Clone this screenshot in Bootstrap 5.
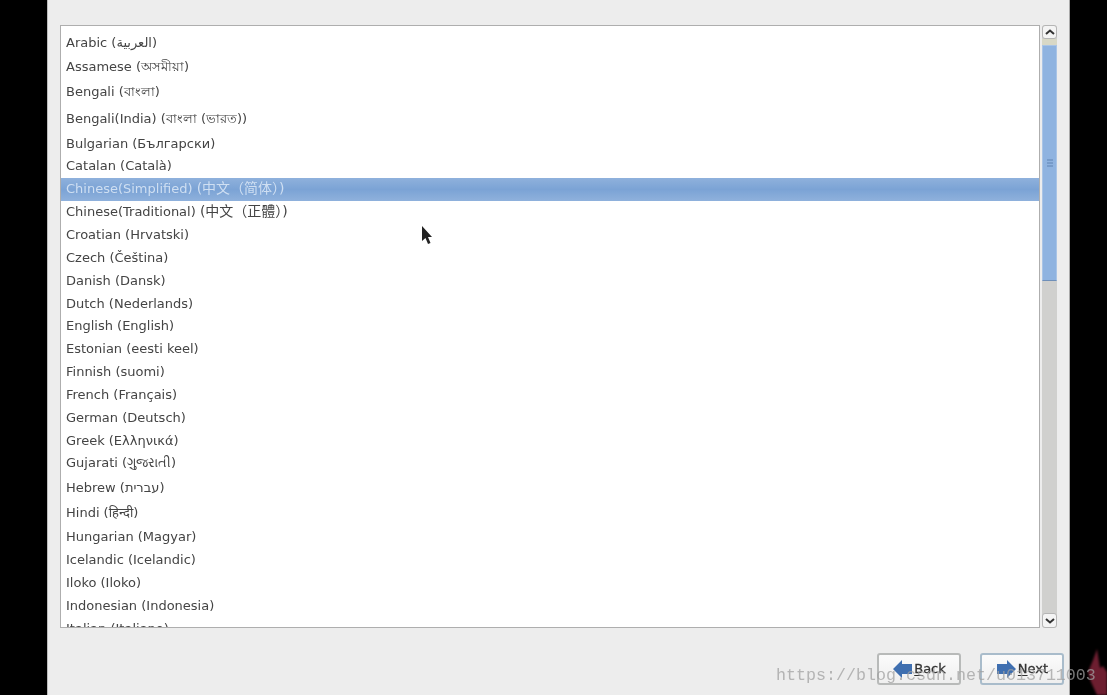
<!DOCTYPE html>
<html lang="en">
<head>
  <meta charset="UTF-8" />
  <title>Language</title>
  <link href="https://cdn.jsdelivr.net/npm/bootstrap@5.3.3/dist/css/bootstrap.min.css" rel="stylesheet"/>
  <style>
    body {
      background: #000;
      height: 695px;
      overflow: hidden;
      font-family: "DejaVu Sans", "Noto Sans", "Noto Sans CJK SC", sans-serif;
    }
    .installer {
      width: 1023px;
      height: 695px;
      margin-left: 47px;
      background: #ededed;
      border-left: 1px solid #bbb;
      border-right: 1px solid #aaa;
      padding: 25px 12px 0 12px;
      filter: blur(.5px);
    }
    .lang-box {
      width: 980px;
      height: 603px;
      background: #fff;
      border: 1px solid #aeaeae;
      overflow: hidden;
    }
    .lang-rows { margin-top: -19px; }
    .lang-row {
      height: 22.85px;
      line-height: 22.85px;
      padding-left: 5px;
      font-size: 13px;
      color: #444;
      white-space: nowrap;
    }
    .lang-row.h24 { height: 24px; line-height: 24px; }
    .lang-row.h25 { height: 25px; line-height: 25px; }
    .lang-row.h27 { height: 26.8px; line-height: 26.8px; }
    .lang-row.picked { background: linear-gradient(#8fb1dc, #7ba3d5 50%, #8fb1dc); color: #cfdff2; }
    .cjk { font-size: 14px; line-height: 1; }
    .scroll-col { width: 15px; height: 603px; margin-left: 2px; background: #d0d0ce; border-radius: 3px; }
    .scroll-btn {
      height: 14px;
      background: #f4f4f4;
      border: 1px solid #b5b5b5;
      border-radius: 3px;
    }
    .scroll-btn.down { height: 15px; }
    .scroll-band { height: 6px; background: #d8d8c6; }
    .scroll-thumb {
      height: 236px;
      background: #8fb3e0;
      border: 1px solid #a9c4e6;
      border-bottom-color: #6f8fb8;
    }
    .scroll-fill { height: 332px; }
    .nav-row { margin-top: 25px; margin-right: -7px; gap: 19px; }
    .nav-btn {
      width: 84px;
      height: 32px;
      padding: 0 0 0 1px;
      background: linear-gradient(#fbfbfb, #efefef);
      border: 2px solid #b8bab9;
      border-radius: 3px;
      color: #333;
      font-size: 13px;
      gap: 2px;
      -webkit-text-stroke: .3px #333;
    }
    .nav-btn.next-btn { border-color: #a9bccb; }
    .nav-btn u { text-underline-offset: 2px; }
    .pointer { position: absolute; left: 421px; top: 226px; filter: blur(.7px); }
    .watermark {
      position: absolute;
      left: 776px;
      top: 666px;
      font-family: "Liberation Mono", monospace;
      font-size: 16.67px;
      line-height: 20px;
      color: rgba(160, 160, 160, .75);
      white-space: nowrap;
      filter: blur(.4px);
    }
    .flame { position: absolute; left: 1084px; top: 646px; filter: blur(1px); }
  </style>
</head>
<body>
  <div class="installer">
    <div class="d-flex">
      <div class="lang-box">
        <div class="lang-rows">
          <div class="lang-row h24">Afrikaans (Afrikaans)</div>
          <div class="lang-row h24">Arabic (العربية)</div>
          <div class="lang-row h24">Assamese (অসমীয়া)</div>
          <div class="lang-row h27">Bengali (বাংলা)</div>
          <div class="lang-row h27">Bengali(India) (বাংলা (ভারত))</div>
          <div class="lang-row">Bulgarian (Български)</div>
          <div class="lang-row">Catalan (Català)</div>
          <div class="lang-row picked">Chinese(Simplified) <span class="cjk">(中文（简体）)</span></div>
          <div class="lang-row">Chinese(Traditional) <span class="cjk">(中文（正體）)</span></div>
          <div class="lang-row">Croatian (Hrvatski)</div>
          <div class="lang-row">Czech (Čeština)</div>
          <div class="lang-row">Danish (Dansk)</div>
          <div class="lang-row">Dutch (Nederlands)</div>
          <div class="lang-row">English (English)</div>
          <div class="lang-row">Estonian (eesti keel)</div>
          <div class="lang-row">Finnish (suomi)</div>
          <div class="lang-row">French (Français)</div>
          <div class="lang-row">German (Deutsch)</div>
          <div class="lang-row">Greek (Ελληνικά)</div>
          <div class="lang-row">Gujarati (ગુજરાતી)</div>
          <div class="lang-row h25">Hebrew (עברית)</div>
          <div class="lang-row h25">Hindi (हिन्दी)</div>
          <div class="lang-row h24">Hungarian (Magyar)</div>
          <div class="lang-row">Icelandic (Icelandic)</div>
          <div class="lang-row">Iloko (Iloko)</div>
          <div class="lang-row">Indonesian (Indonesia)</div>
          <div class="lang-row">Italian (Italiano)</div>
        </div>
      </div>
      <div class="scroll-col">
        <div class="scroll-btn d-flex align-items-center justify-content-center">
          <svg width="10" height="6" viewBox="0 0 10 6"><path d="M1 5 5 1.500 9 5" fill="none" stroke="#333" stroke-width="2"/></svg>
        </div>
        <div class="scroll-band"></div>
        <div class="scroll-thumb d-flex align-items-center justify-content-center">
          <svg width="6" height="8" viewBox="0 0 6 8"><path d="M0 1h6M0 4h6M0 7h6" stroke="#5f83b3"/></svg>
        </div>
        <div class="scroll-fill"></div>
        <div class="scroll-btn down d-flex align-items-center justify-content-center">
          <svg width="10" height="6" viewBox="0 0 10 6"><path d="M1 1 5 4.500 9 1" fill="none" stroke="#333" stroke-width="2"/></svg>
        </div>
      </div>
    </div>
    <div class="d-flex justify-content-end nav-row">
      <button class="btn nav-btn d-flex align-items-center justify-content-center">
        <svg width="19" height="18" viewBox="0 0 19 18"><path d="M0 9 9 0v4h10v10H9v4z" fill="#3f6fb0"/></svg>
        <span><u>B</u>ack</span>
      </button>
      <button class="btn nav-btn next-btn d-flex align-items-center justify-content-center">
        <svg width="19" height="18" viewBox="0 0 19 18"><path d="M19 9 10 0v4H0v10h10v4z" fill="#3f6fb0"/></svg>
        <span><u>N</u>ext</span>
      </button>
    </div>
  </div>
  <svg class="pointer" width="13" height="20" viewBox="0 0 13 20"><path d="M1 0v15l3.500-3 2.500 6 2.500-1-2.500-6H11z" fill="#222"/></svg>
  <svg class="flame" width="23" height="49" viewBox="0 0 23 49"><path d="M13 3 9 14 4 26 7 36 13 49H23V26L19 20 16 22z" fill="#6d1e30"/></svg>
  <div class="watermark">https://blog.csdn.net/u013711003</div>
</body>
</html>
